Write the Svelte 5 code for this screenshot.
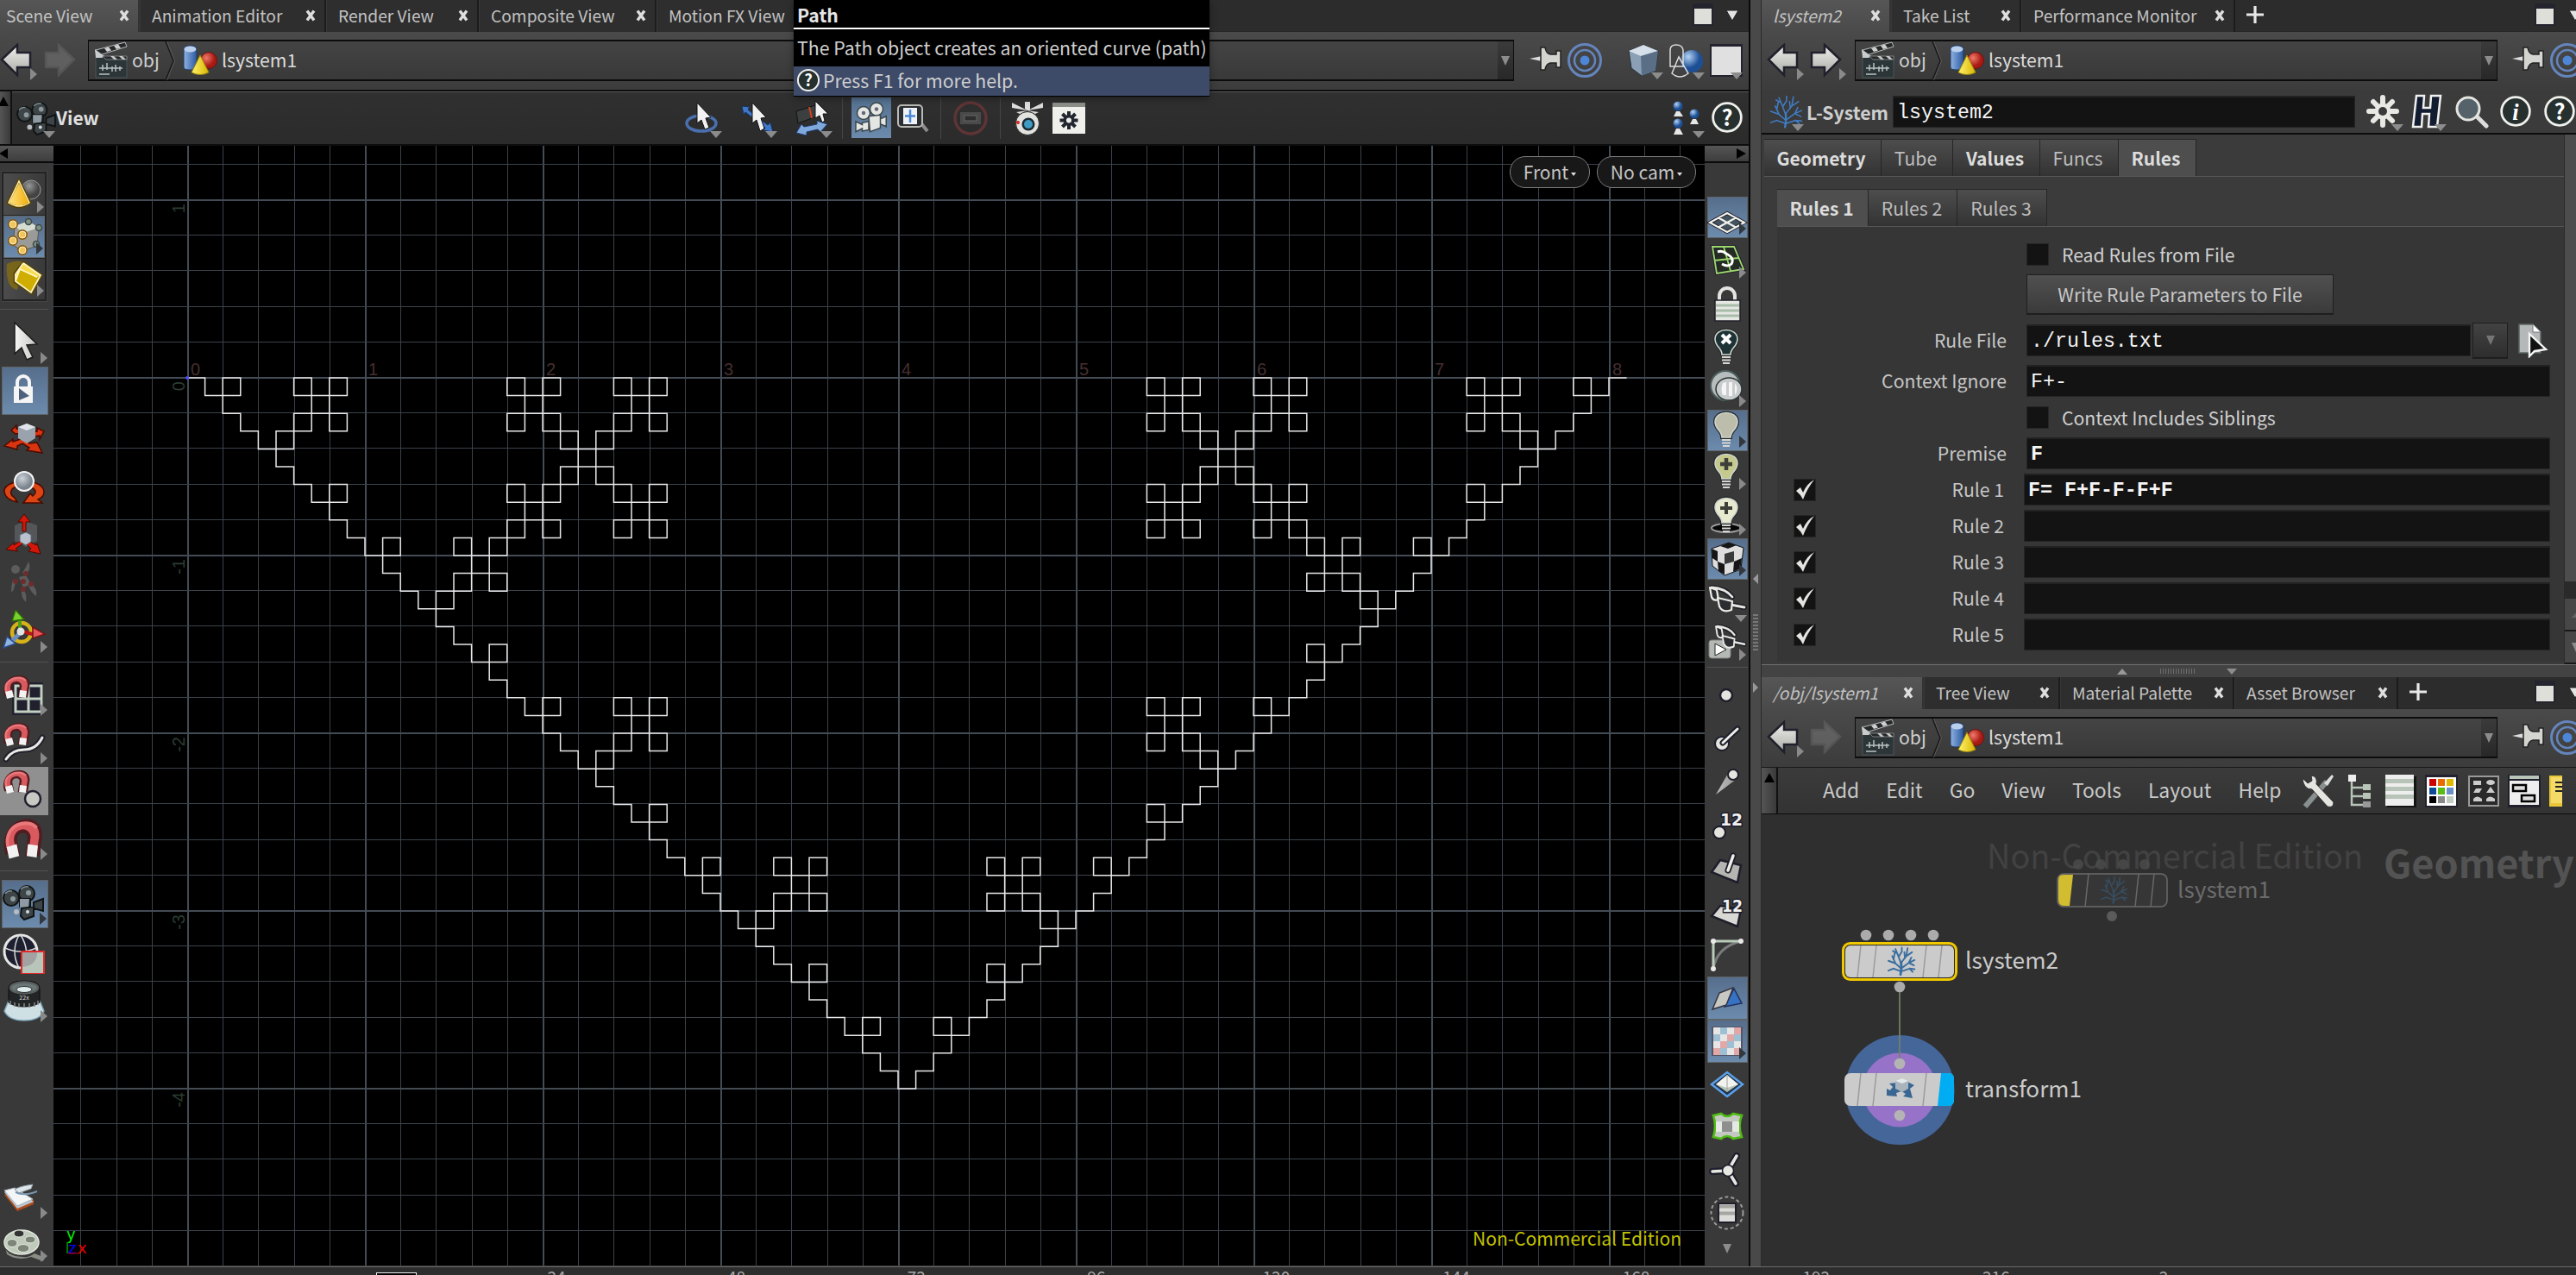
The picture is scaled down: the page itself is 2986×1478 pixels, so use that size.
<script>
  const sceneTabs = [
    { label: 'Scene View', w: 162, active: true },
    { label: 'Animation Editor', w: 216 },
    { label: 'Render View', w: 177 },
    { label: 'Composite View', w: 206 },
    { label: 'Motion FX View', w: 200 }
  ];
  const paramTabs = [
    { label: 'lsystem2', w: 150, active: true, italic: true },
    { label: 'Take List', w: 151 },
    { label: 'Performance Monitor', w: 248 }
  ];
  const networkTabs = [
    { label: '/obj/lsystem1', w: 188, active: true, italic: true },
    { label: 'Tree View', w: 158 },
    { label: 'Material Palette', w: 202 },
    { label: 'Asset Browser', w: 190 }
  ];
  const folders = [
    { label: 'Geometry', w: 136, bold: true },
    { label: 'Tube', w: 83 },
    { label: 'Values', w: 101, bold: true },
    { label: 'Funcs', w: 91 },
    { label: 'Rules', w: 90, bold: true, active: true }
  ];
  const subFolders = [
    { label: 'Rules 1', w: 106, bold: true, active: true },
    { label: 'Rules 2', w: 103 },
    { label: 'Rules 3', w: 104 }
  ];
  const rules = ['F= F+F-F-F+F', '', '', '', ''];
  const menus = ['Add', 'Edit', 'Go', 'View', 'Tools', 'Layout', 'Help'];

  const selectTools = [
    { icon: 'cone', h: 49, fly: true },
    { icon: 'points', h: 49, fly: true, on: true },
    { icon: 'cube', h: 48, fly: true }
  ];
  const transformTools = [
    { icon: 'arrow', h: 59, fly: true },
    { icon: 'lock', h: 56, on: true },
    { icon: 'move', h: 54 },
    { icon: 'rotate', h: 58 },
    { icon: 'scale', h: 55 },
    { icon: 'pose', h: 56 },
    { icon: 'handle', h: 56, fly: true }
  ];
  const snapTools = [
    { icon: 'snapgrid', h: 55, fly: true },
    { icon: 'snapcurve', h: 56, fly: true },
    { icon: 'snappoint', h: 56, lit: true },
    { icon: 'snap', h: 55, fly: true }
  ];
  const viewTools = [
    { icon: 'camera', h: 56, fly: true, on: true },
    { icon: 'globe', h: 56 },
    { icon: 'lens', h: 56, fly: true }
  ];
  const fileTools = [
    { icon: 'book', h: 52, fly: true },
    { icon: 'reel', h: 50, fly: true }
  ];
  const displayTools = [
    { icon: 'plane', h: 48, fly: true, on: true },
    { icon: 'cplane', h: 50, fly: true },
    { icon: 'padlock', h: 52 },
    { icon: 'bulbx', h: 49 },
    { icon: 'dial', h: 48, fly: true },
    { icon: 'bulb', h: 48, fly: true, on: true },
    { icon: 'bulbplus', h: 48, fly: true },
    { icon: 'bulbdisc', h: 53, fly: true },
    { icon: 'checker', h: 48, fly: true, on: true },
    { icon: 'glasses', h: 49, down: true },
    { icon: 'glassesplay', h: 48, fly: true }
  ];
  const markerTools = [
    { icon: 'dot' }, { icon: 'normal' }, { icon: 'trail' }, { icon: 'num' },
    { icon: 'prim' }, { icon: 'primnum' }, { icon: 'hull' },
    { icon: 'backface', on: true }, { icon: 'uv', on: true, fly: true },
    { icon: 'diamond' }, { icon: 'patch' }, { icon: 'spokes' }, { icon: 'list' }
  ].map((t) => ({ ...t, h: 50.1 }));

  // Viewport: world unit is 206px, origin at (217, 438)
  const unit = 206, ox = 217, oy = 438;
  const cols = Array.from({ length: 47 }, (_, i) => i - 3);
  const rows = Array.from({ length: 32 }, (_, i) => i - 6);

  function expand(rule, depth) {
    let s = 'F';
    for (let i = 0; i < depth; i++) s = s.replaceAll('F', rule);
    return s;
  }
  function trace(program, step) {
    let x = ox, y = oy, dx = step, dy = 0, d = `M${x} ${y}`;
    for (const c of program) {
      if (c === 'F') {
        x += dx; y += dy;
        d += `L${x.toFixed(1)} ${y.toFixed(1)}`;
      } else if (c === '+') [dx, dy] = [-dy, dx];
      else [dx, dy] = [dy, -dx];
    }
    return d;
  }
  const curve = trace(expand('F+F-F-F+F', 4), unit / 10);
  const frames = [24, 48, 72, 96, 120, 144, 168, 192, 216];
</script>

{#snippet tree(color, w)}
  <g fill="none" stroke={color} stroke-linecap="round">
    <path stroke-width={w * 1.5} d="M23 43C25 36 24 31 24 25" />
    <path stroke-width={w} d="M24 34L15 26L10 15M15 26L4 22M12 20L14 10M24 27L20 16L15 4M20 16L25 8V2M17 10L11 7M24 25L32 15L34 3M32 15L41 9M30 18L29 9M25 33L36 25L45 21M36 25L44 29M25 38L37 34L42 39M37 34L45 35M23 38L12 34L4 37M36 25L40 17" />
  </g>
{/snippet}

{#snippet magnet()}
  <path d="M6 24C-1 0 36 -6 33 14L31 25H22L24 13C23 7 13 8 13 15L15 24Z" fill="#d85a5f" stroke="#521c20" stroke-width="2.4" />
  <path d="M7 20C3 4 24 0 30 7" fill="none" stroke="#e9787b" stroke-width="2.5" />
  <path d="M6 20l8-2 2 8-8 2zM23 18l8 1-1 8-8-1z" fill="#f2f2f2" />
{/snippet}

{#snippet bulbBase(fill)}
  <path d="M20 33C20 25 12 24 12 15C12 1 38 1 38 15C38 24 30 25 30 33Z" {fill} stroke="#262b2b" stroke-width="4" />
  <path d="M20 33C20 25 12 24 12 15C12 1 38 1 38 15C38 24 30 25 30 33Z" {fill} stroke="#cfd3cd" stroke-width="1.6" />
  <path d="M20 36h10M20 39.500h10M21 43h8" stroke="#d5d8d4" stroke-width="2" />
{/snippet}

{#snippet glassesShape()}
  <path d="M8 9Q24 10 32 20M30 29L46 32" fill="none" stroke="#1d1d26" stroke-width="6" stroke-linecap="round" />
  <path d="M8 9Q24 10 32 20M30 29L46 32" fill="none" stroke="#e6e6e2" stroke-width="2.800" stroke-linecap="round" />
  <path d="M6 9L14 12L16 23Q10 25 8 20Z" fill="#2b2d31" stroke="#ecece8" stroke-width="2.200" stroke-linejoin="round" />
  <path d="M15 21L32 25L31 35Q21 39 17 31Z" fill="#2b2d31" stroke="#ecece8" stroke-width="2.200" stroke-linejoin="round" />
{/snippet}

{#snippet icon(name)}
  {#if name === 'cone'}
    <circle cx="36" cy="19" r="11" fill="url(#gGrey)" stroke="#999" />
    <path d="M22 8L35 34Q22 44 9 34Z" fill="url(#gYellow)" stroke="#5a4000" stroke-width="3" />
    <path d="M22 9L34 34Q22 42 10 34Z" fill="none" stroke="#fff0b0" stroke-width="1.500" />
  {:else if name === 'points'}
    <path d="M17 12L33 6L45 14L43 35L26 41L15 34Z" fill="#9a9a98" stroke="#555" />
    <path d="M17 12L33 6L45 14L27 20Z" fill="#d5ddd3" />
    {#each [[33, 7], [45, 14], [42, 33]] as p}<circle cx={p[0]} cy={p[1]} r="3.500" fill="#7f9088" stroke="#3b4a44" stroke-width="1.500" />{/each}
    {#each [[15, 10], [15, 29], [26, 22], [26, 40]] as p}<circle cx={p[0]} cy={p[1]} r="5" fill="#f2c55a" stroke="#8a5a08" stroke-width="2" /><circle cx={p[0]} cy={p[1]} r="4" fill="none" stroke="#fff2cc" />{/each}
  {:else if name === 'cube'}
    <path d="M8 8Q18 2 28 6L20 38Q6 36 8 8Z" fill="#9a7a00" opacity=".6" />
    <path d="M27 6L48 21L37 42L17 29V19Z" fill="#cfae00" stroke="#5a4600" stroke-width="3" />
    <path d="M27 7L47 21L42 24L23 14Z" fill="#f6dc4e" /><path d="M27 7L23 14L18 28V19Z" fill="#f2d23a" />
    <path d="M27 7L47 21L36 41L18 28L23 14L43 23M27 7L18 20V28" fill="none" stroke="#fff7c8" stroke-width="1.800" />
  {:else if name === 'arrow'}
    <path d="M17 3V39L25 32L31 46L38 43L31 29L43 28Z" fill="url(#gWhite)" stroke="#1c1c1c" stroke-width="1.500" />
  {:else if name === 'lock'}
    <rect x="17" y="20" width="22" height="19" fill="#f5f5f5" />
    <path d="M21 21V15a7 7 0 0 1 14 0v6" fill="none" stroke="#f5f5f5" stroke-width="4" />
    <path d="M23 22V36L35 31Z" fill="#4c617c" />
  {:else if name === 'move'}
    <path d="M5 34L15 26V29L30 24L34 31L43 30L49 42L31 39L34 36L26 31L20 34V38ZM13 16L19 10V14L28 14V19L18 20ZM34 18L43 17V13L51 17L46 26V22L34 24Z" fill="#d93410" stroke="#4a0a00" stroke-width="1.500" />
    <path d="M21 12L31 8L41 12V25L31 31L21 25Z" fill="#9aa2ad" /><path d="M21 12L31 8L41 12L31 16Z" fill="#dfe4ea" />
  {:else if name === 'rotate'}
    <path d="M17 20Q4 24 5 31Q6 40 20 43L17 38Q10 34 14 28Q17 25 22 25ZM39 20Q51 24 51 31Q51 37 44 40L49 44H27L35 33L38 36Q45 30 36 26Z" fill="#dc4513" stroke="#4a0a00" stroke-width="1.500" />
    <circle cx="28" cy="19" r="11" fill="url(#gSphere)" stroke="#f4f4f4" stroke-width="2" />
  {:else if name === 'scale'}
    <path d="M17 13L30 8L43 13V31L30 38L17 31Z" fill="#5b5f62" opacity=".8" />
    <path d="M28 0L35 9H30V20H26V9H21ZM7 41L16 33V36L25 30L27 34L18 40L21 43ZM47 46L33 43L36 40L30 34L33 31L42 36L43 34Z" fill="#d3160a" stroke="#4a0a00" />
    <path d="M23 24l7-3 6 3v8l-6 4-7-4z" fill="#b8c1cc" stroke="#5f6873" />
  {:else if name === 'pose'}
    <g fill="#5c5c5c"><circle cx="18" cy="9" r="5" /><path d="M33 0q4 8-3 15l-4-2q4-6 7-13zM22 18l8-2 6 10-9 4zM18 23q-2 13-5 12 0-8 2-14zM36 25q8 8 6 15-6-4-9-12zM26 31q6 6 4 16-6-5-5-14z" /></g>
    <g fill="#6d2c2e"><circle cx="30" cy="14" r="3" /><circle cx="18" cy="23" r="3" /><circle cx="27" cy="23" r="3" /><circle cx="36" cy="26" r="3" /><circle cx="27" cy="32" r="3" /></g>
  {:else if name === 'handle'}
    <circle cx="25" cy="26" r="11" fill="none" stroke="#d6b21a" stroke-width="4.500" />
    <path d="M26 25L41 29" stroke="#b61818" stroke-width="4" /><path d="M24 26L14 36" stroke="#6b8fc4" stroke-width="5" /><path d="M23 12V24" stroke="#4f9d17" stroke-width="4" />
    <path d="M18 0L28 11L14 13Z" fill="#79cf2b" stroke="#2c6a08" stroke-width="1.500" />
    <path d="M38 20L52 28L38 33Z" fill="#e6575b" stroke="#7a1214" stroke-width="1.500" />
    <path d="M4 44L8 31L18 39Z" fill="#8fb4e4" stroke="#2a4d85" stroke-width="1.500" />
    <circle cx="24" cy="25" r="4.500" fill="#dfe3e3" />
  {:else if name === 'snapgrid'}
    <rect x="14" y="10" width="36" height="38" fill="#20202e" /><path d="M18 14H48V44H18ZM33 14V44M18 29H48" fill="none" stroke="#c2d0c2" stroke-width="3" />
    <g transform="translate(0 1)">{@render magnet()}</g>
  {:else if name === 'snapcurve'}
    <path d="M7 44Q14 33 28 33T49 19" fill="none" stroke="#20202e" stroke-width="7" stroke-linecap="round" /><path d="M7 44Q14 33 28 33T49 19" fill="none" stroke="#e9e9e4" stroke-width="3" stroke-linecap="round" />
    <g transform="translate(0 1)">{@render magnet()}</g>
  {:else if name === 'snappoint'}
    <circle cx="38" cy="34" r="9" fill="#c9c9c4" stroke="#20202e" stroke-width="2.500" />{@render magnet()}
  {:else if name === 'snap'}
    <g transform="translate(-1 0) scale(1.45 1.7)">{@render magnet()}</g>
  {:else if name === 'camera'}
    <g fill="#3d4548" stroke="#101415" stroke-width="2"><circle cx="14" cy="18" r="9" /><circle cx="32" cy="13" r="9" /><path d="M24 19h12v9h-12zM26 30l14-2v11l-11 4-4-4zM40 23l11-4v14l-11-3z" /></g>
    <circle cx="16" cy="19" r="3" fill="#8d999d" /><circle cx="34" cy="12" r="3" fill="#8d999d" /><path d="M24 19h11l-1 9-10 1z" fill="#8f9aa5" /><circle cx="20" cy="34" r="3" fill="#b6bcc0" /><circle cx="33" cy="34" r="2" fill="#d5dadd" />
    <path d="M7 13Q10 9 15 10M25 8Q29 4 34 5" fill="none" stroke="#7f8b90" stroke-width="1.500" />
  {:else if name === 'globe'}
    <circle cx="24" cy="24" r="19" fill="#1e1f30" stroke="#e6e6e6" stroke-width="3" /><path d="M24 5Q36 24 26 43M22 5Q12 24 22 43M6 20Q24 28 42 20" fill="none" stroke="#d6dbd6" stroke-width="1.500" />
    <rect x="25" y="24" width="26" height="26" fill="#b8c5ba" stroke="#e02a2a" stroke-width="2" /><path d="M26 25h17q0 15-17 17z" fill="#a2a2a2" />
  {:else if name === 'lens'}
    <path d="M10 25L5 37Q10 48 28 48T51 37L46 25Z" fill="#cfe0e4" stroke="#79a5bb" stroke-width="1.500" />
    <path d="M10 11Q10 2 28 2T46 11V27Q40 32 28 32T10 27Z" fill="#222526" stroke="#0d0d0d" /><ellipse cx="28" cy="10" rx="16" ry="6.500" fill="#6b7677" stroke="#595f60" stroke-width="2.500" /><ellipse cx="28" cy="12" rx="9" ry="3.500" fill="#dfeded" stroke="#333" />
    <path d="M12 25v5M17 27v5M22 28v5M28 28v5M34 28v5M40 27v5M44 25v5" stroke="#888" stroke-width="1.500" />
    <text x="28" y="24" font-size="7" text-anchor="middle" fill="#ddd">22x</text>
  {:else if name === 'book'}
    <path d="M5 20L20 39L39 31V26L18 13Z" fill="#b04a1a" /><path d="M5 17L20 36L39 28L20 14Z" fill="#b9c8d4" /><path d="M5 15L17 12L38 25L20 33Z" fill="#f3f5f7" stroke="#a6b2bc" /><path d="M17 14Q22 10 38 8L36 13L22 18Z" fill="#dce5ea" stroke="#8a979f" /><path d="M18 17Q28 22 43 16" fill="none" stroke="#7895ad" stroke-width="2" />
  {:else if name === 'reel'}
    <path d="M5 25Q5 40 26 41Q34 42 40 37L52 42L50 46L36 41Q20 46 8 38Z" fill="#8a8f86" />
    <ellipse cx="25" cy="24" rx="20" ry="14" fill="#c0cabb" stroke="#e2e8dd" stroke-width="1.500" /><g fill="#7d8579" stroke="#e7ebe4"><ellipse cx="22" cy="14" rx="6" ry="4" fill="#333" /><ellipse cx="35" cy="21" rx="6" ry="4" /><ellipse cx="14" cy="25" rx="6" ry="4.500" /><ellipse cx="27" cy="31" rx="7" ry="4.500" /></g>
  {:else if name === 'plane'}
    <path d="M6 31L26 20L46 31L26 42Z" fill="#43535f" stroke="#1b1b28" stroke-width="4" /><path d="M6 31L26 20L46 31L26 42ZM16 25.500L36 36.500M36 25.500L16 36.500" fill="none" stroke="#f1f1ec" stroke-width="2.200" />
  {:else if name === 'cplane'}
    <path d="M9 10L34 10L45 36L14 41Z" fill="#242b22" stroke="#24232e" stroke-width="4" /><path d="M9 10L34 10L45 36L14 41ZM11 26L39 23M22 10L30 38" fill="none" stroke="#9cd96c" stroke-width="1.800" /><path d="M15 16Q20 14 25 18Q35 23 31 30Q27 34 20 30" fill="none" stroke="#fff" stroke-width="3" />
  {:else if name === 'padlock'}
    <path d="M17 22V16a9 9 0 0 1 18 0v6" fill="none" stroke="#e4e4e1" stroke-width="4" /><rect x="12" y="21" width="29" height="24" fill="#e6e8e3" stroke="#20202a" stroke-width="1.500" /><path d="M13 27h27M13 33h27M13 39h27" stroke="#a9bba9" stroke-width="3" />
  {:else if name === 'bulbx'}
    {@render bulbBase('#1d3336')}<path d="M20 10l10 10M30 10l-10 10" stroke="#fff" stroke-width="4" />
  {:else if name === 'dial'}
    <ellipse cx="24" cy="21" rx="17" ry="17" fill="#b7bdbd" stroke="#4e6060" stroke-width="2" /><ellipse cx="28" cy="25" rx="15" ry="13" fill="#c9cccc" stroke="#2d3535" stroke-width="1.500" /><path d="M21 18q-3 7 0 14h4V17zM28 17v16h4V17zM35 18v14q5-7 0-14z" fill="#f5f5f5" />
  {:else if name === 'bulb'}
    {@render bulbBase('#bdbdac')}
  {:else if name === 'bulbplus'}
    {@render bulbBase('#c5c98d')}<path d="M25 9v14M18 16h14" stroke="#3f3f3a" stroke-width="4.500" />
  {:else if name === 'bulbdisc'}
    <ellipse cx="25" cy="39" rx="17" ry="5" fill="#050505" stroke="#9b9b9b" stroke-width="2" />{@render bulbBase('#e8ead0')}<path d="M25 9v14M18 16h14" stroke="#3f3f3a" stroke-width="4" />
  {:else if name === 'checker'}
    <path d="M8 13L28 6L45 12L42 37L23 44L9 33Z" fill="#dedede" stroke="#111" /><path d="M18 10L28 6L37 9L27 13ZM8 13L15 16V28L9 24ZM15 28L23 31V43L16 39Z" fill="#161616" /><path d="M23 19L34 16V28L23 31Z" fill="#3a3a3a" /><path d="M34 28L43 24L42 36L33 40Z" fill="#161616" />
  {:else if name === 'glasses'}
    {@render glassesShape()}
  {:else if name === 'glassesplay'}
    <rect x="5" y="22" width="25" height="21" rx="3" fill="#b5b9b5" stroke="#7c7f7c" /><path d="M12 26V40L25 33Z" fill="#fff" stroke="#222" /><g transform="translate(8 -2) scale(.83 .9)">{@render glassesShape()}</g>
  {:else if name === 'dot'}
    <circle cx="25" cy="25" r="7" fill="#e5e5df" stroke="#1e1e2c" stroke-width="2.500" />
  {:else if name === 'normal'}
    <circle cx="20" cy="31" r="8" fill="#e5e5df" stroke="#1e1e2c" stroke-width="2" /><path d="M21 30L38 14" stroke="#1e1e2c" stroke-width="7" stroke-linecap="round" /><path d="M21 30L38 14" stroke="#f0f0ea" stroke-width="3" stroke-linecap="round" />
  {:else if name === 'trail'}
    <path d="M13 40L28 14L37 22Z" fill="url(#gWhite)" opacity=".7" /><circle cx="33" cy="17" r="6" fill="#e5e5df" stroke="#1e1e2c" stroke-width="2" />
  {:else if name === 'num'}
    <circle cx="17" cy="34" r="7" fill="#e5e5df" stroke="#1e1e2c" stroke-width="2" /><text class="mark" x="18" y="26" textLength="26" lengthAdjust="spacingAndGlyphs">12</text>
  {:else if name === 'prim'}
    <path d="M8 30L18 16L42 22L38 42Z" fill="#b5b5b2" stroke="#1e1e2c" stroke-width="2.500" /><path d="M27 28L33 11" stroke="#1e1e2c" stroke-width="7" stroke-linecap="round" /><path d="M27 28L33 11" stroke="#f0f0ea" stroke-width="3.500" stroke-linecap="round" />
  {:else if name === 'primnum'}
    <path d="M8 30L18 18L42 22L38 42Z" fill="#d8d8d4" stroke="#1e1e2c" stroke-width="2.500" /><text class="mark" x="20" y="25" textLength="24" lengthAdjust="spacingAndGlyphs">12</text>
  {:else if name === 'hull'}
    <path d="M10 41Q14 16 42 9" fill="none" stroke="#7b7b7b" stroke-width="3" /><path d="M10 41V9H42" fill="none" stroke="#b9cbb9" stroke-width="3" />{#each [[10, 9], [42, 9], [10, 41]] as p}<circle cx={p[0]} cy={p[1]} r="3" fill="#e8e8e8" />{/each}
  {:else if name === 'backface'}
    <path d="M23 35L34 14L43 31Z" fill="#3872c4" stroke="#20305c" stroke-width="1.500" /><path d="M9 38L17 19L33 13L25 33Z" fill="#c8c8c2" stroke="#333340" stroke-width="1.500" />
  {:else if name === 'uv'}
    <rect x="8" y="8" width="36" height="34" fill="#556" /><g transform="translate(10 9)"><rect width="32" height="32" fill="#e6e6e6" /><path d="M8 0h8v8H8zM0 8h8v8H0zM24 8h8v8h-8zM16 16h8v8h-8zM8 24h8v8H8z" fill="#9ec0d4" /><path d="M24 0h8v8h-8zM16 8h8v8h-8zM8 16h8v8H8zM24 24h8v8h-8zM0 24h8v8H0z" fill="#e2a7a7" /></g>
  {:else if name === 'diamond'}
    <path d="M8 25L26 11L44 25L26 39Z" fill="#23344a" stroke="#5aa0ea" stroke-width="2.500" /><path d="M13 25L26 34L39 25L26 15Z" fill="#b9c6b9" /><path d="M13 25L26 14V29ZM39 25L26 14V29Z" fill="#f2f2ee" /><path d="M26 14V34" stroke="#9aa39a" />
  {:else if name === 'patch'}
    <path d="M10 11L19 9Q26 15 33 9L43 11Q38 23 43 36L33 38Q26 32 19 38L10 36Q14 23 10 11Z" fill="#c4c8c2" stroke="#4fbb14" stroke-width="2.600" /><path d="M20 18h12v12H20z" fill="#8f8f8f" /><path d="M13 18h7v12h-7zM32 18h8v12h-8z" fill="#e6e8e4" />
  {:else if name === 'spokes'}
    <path d="M27 25L37 8M27 25L9 26M27 25L36 40" stroke="#1e1e2c" stroke-width="8" stroke-linecap="round" /><path d="M27 25L37 8M27 25L9 26M27 25L36 40" stroke="#e8e8e3" stroke-width="3.500" stroke-linecap="round" /><circle cx="27" cy="25" r="6.500" fill="#e8e8e3" stroke="#1e1e2c" stroke-width="1.500" />
  {:else if name === 'list'}
    <circle cx="26" cy="24" r="18.500" fill="none" stroke="#9a9a9a" stroke-width="2" stroke-dasharray="4 3" /><rect x="16" y="13" width="20" height="22" fill="#dcdcd9" stroke="#1e1e2c" stroke-width="2" /><path d="M17 16.500h18M17 24.500h18" stroke="#a5a5a2" stroke-width="4" />
  {/if}
{/snippet}

{#snippet toolbar(tools, right)}
  {#each tools as t}
    <div class="tool" class:on={t.on} class:lit={t.lit} style:height="{t.h}px">
      <svg width={right ? 50 : 56} height="50" viewBox="0 0 {right ? 50 : 56} 50">{@render icon(t.icon)}</svg>
      {#if t.fly}<i class="fly"></i>{/if}
      {#if t.down}<i class="tri corner"></i>{/if}
    </div>
  {/each}
{/snippet}

{#snippet tabbar(tabs, plus)}
  <div class="tabs">
    {#each tabs as t}
      <div class="tab" class:active={t.active} class:italic={t.italic} style:width="{t.w}px">
        <span>{t.label}</span>
        <svg width="12" height="14" viewBox="0 0 12 14"><path d="M2 1.500L10 12.500M10 1.500L2 12.500" stroke="#dedede" stroke-width="3.400" /></svg>
      </div>
    {/each}
    {#if plus}<svg class="plus" width="22" height="22" viewBox="0 0 22 22"><path d="M11 1V21M1 11H21" stroke="#e8e8e8" stroke-width="3.200" /></svg>{/if}
    <span class="grow"></span>
    <svg class="win" width="24" height="26" viewBox="0 0 24 26"><path d="M0 0H24V26H0Z" fill="#24242f" /><path d="M2 6H22V24H2Z" fill="#dfdfda" /></svg>
    <svg class="wintri" width="16" height="14" viewBox="0 0 16 14"><path d="M1 1H15L8 13Z" fill="#e4e4e0" stroke="#22222c" /></svg>
  </div>
{/snippet}

{#snippet nav(dir, dim)}
  <div class="nav" class:dim>
    <svg width="40" height="42" viewBox="0 0 40 42"><path d={dir < 0 ? 'M2 19L20 2V11H35V28H20V37Z' : 'M36 19L18 2V11H3V28H18V37Z'} fill={dim ? '#777' : 'url(#gNav)'} stroke={dim ? '#666' : '#20202c'} stroke-width="2.500" /></svg>
    {#if !dim}<i class="fly"></i>{/if}
  </div>
{/snippet}

{#snippet path()}
  <div class="path">
    <svg class="clap" width="40" height="44" viewBox="0 0 40 44">
      <path d="M2 18H38V42H2Z" fill="#2c3638" stroke="#4a5658" />
      <path d="M2 10L36 1L38 6L3 17Z" fill="#26292a" stroke="#b9bcbc" /><path d="M12 8l5-1.500 3 4-5 1.500zM23 5l5-1.500 3 4-5 1.500z" fill="#d0d0d0" /><path d="M1 9L12 17L9 19H2Z" fill="#c9cccc" />
      <path d="M10 17H38V21H14Z" fill="#26292a" stroke="#8d9292" stroke-width=".8" /><path d="M19 17l4 4h4l-4-4zM29 17l4 4h4l-4-4z" fill="#c5c5c5" />
      <path d="M6 31h27M10 27v7M15 25v8M21 29v6M25 27v8M30 29v5M6 38h12" stroke="#b9c1c1" stroke-width="1.500" />
    </svg>
    <span class="obj">obj</span>
    <svg class="chev" width="12" height="45" viewBox="0 0 12 45"><path d="M1 0L10 22.500L1 45" fill="none" stroke="#181818" stroke-width="1.500" /><path d="M2.500 0L11.500 22.500L2.500 45" fill="none" stroke="#5a5a5a" /></svg>
    <svg width="42" height="36" viewBox="0 0 42 36"><path d="M2 5Q2 1 9.500 1T17 5V26Q17 29 9.500 29T2 26Z" fill="url(#gBlue)" stroke="#223c63" /><ellipse cx="9.500" cy="5" rx="7" ry="3.500" fill="#b9cfec" /><circle cx="31" cy="18" r="9.500" fill="url(#gRed)" stroke="#6b1210" /><path d="M21 12L31 32Q21 37 11 32Z" fill="url(#gYel2)" stroke="#9a8410" /></svg>
    <span class="cur">lsystem1</span>
    <span class="grow"></span>
    <div class="drop"><i class="tri"></i></div>
  </div>
{/snippet}

{#snippet pinTarget()}
  <svg class="pin" width="38" height="34" viewBox="0 0 38 34"><path d="M0 15L14 12V18Z" fill="#ddd" /><path d="M13 2L18 2Q19 9 24 10H31V6H36V25H31V20H24Q19 21 18 28H13Z" fill="#d4d4d0" stroke="#222" stroke-width="1.500" /></svg>
  <svg width="42" height="42" viewBox="0 0 42 42"><g fill="none" stroke="#6485bd" stroke-width="3"><circle cx="21" cy="21" r="18.500" /><circle cx="21" cy="21" r="12" stroke-width="2.500" /></g><circle cx="21" cy="21" r="5.500" fill="#4d86d6" /></svg>
{/snippet}

{#snippet help(ch, size)}
  <svg width={size} height={size} viewBox="0 0 36 36"><circle cx="18" cy="18" r="15.500" fill="#26302f" stroke="#f0f0ec" stroke-width="2.600" /><text class={ch === 'i' ? 'inf' : 'ask'} x="18" y="27" text-anchor="middle">{ch}</text></svg>
{/snippet}

{#snippet check(on)}
  <div class="check">{#if on}<svg width="24" height="26" viewBox="0 0 24 26"><path d="M2 14L7 10L10 16Q14 6 23 1Q15 11 10 24Q7 18 2 14Z" fill="#e4e4e2" /></svg>{/if}</div>
{/snippet}

<svg class="defs" width="0" height="0">
  <defs>
    <radialGradient id="gGrey" cx=".4" cy=".3"><stop offset="0" stop-color="#999" /><stop offset="1" stop-color="#444" /></radialGradient>
    <radialGradient id="gSphere" cx=".4" cy=".35"><stop offset="0" stop-color="#cdd3da" /><stop offset="1" stop-color="#7b838d" /></radialGradient>
    <linearGradient id="gYellow"><stop offset="0" stop-color="#ffe48a" /><stop offset="1" stop-color="#f0ab00" /></linearGradient>
    <linearGradient id="gYel2"><stop offset="0" stop-color="#fff36b" /><stop offset="1" stop-color="#d9b400" /></linearGradient>
    <linearGradient id="gWhite"><stop offset="0" stop-color="#f6f6f6" /><stop offset="1" stop-color="#c4c4c0" /></linearGradient>
    <linearGradient id="gNav" x2="0" y2="1"><stop offset="0" stop-color="#f0f0ee" /><stop offset="1" stop-color="#aaaaa6" /></linearGradient>
    <linearGradient id="gBlue"><stop offset="0" stop-color="#8fb2e2" /><stop offset="1" stop-color="#2c59a0" /></linearGradient>
    <radialGradient id="gRed" cx=".35" cy=".35"><stop offset="0" stop-color="#f07a6a" /><stop offset="1" stop-color="#a81a14" /></radialGradient>
    <radialGradient id="gBall" cx=".35" cy=".3"><stop offset="0" stop-color="#b5d3f5" /><stop offset="1" stop-color="#1d4f96" /></radialGradient>
  </defs>
</svg>

<div class="app">
  <section class="scene">
    {@render tabbar(sceneTabs, false)}
    <div class="pathrow">
      {@render nav(-1, false)}
      {@render nav(1, true)}
      {@render path()}
      {@render pinTarget()}
      <div class="shade"><svg width="38" height="38" viewBox="0 0 38 38"><path d="M2 8L19 1L36 8L33 31L17 37L5 28Z" fill="#8ba0b5" stroke="#222c36" /><path d="M2 8L19 1L36 8L16 14Z" fill="#d5e0ea" /><path d="M16 14L36 8L33 31L17 37Z" fill="#5a6f85" /></svg><i class="tri corner"></i></div>
      <div class="shade"><svg width="40" height="40" viewBox="0 0 40 40"><circle cx="27" cy="20" r="13" fill="url(#gBall)" /><path d="M2 7Q2 1 9 1T17 7V26H2ZM12 15L23 34Q13 42 4 34Z" fill="#4446" stroke="#ddd" stroke-width="1.500" /></svg><i class="tri corner"></i></div>
      <div class="shade"><svg width="38" height="38" viewBox="0 0 38 38"><path d="M0 0H38V38H0Z" fill="#24242f" /><path d="M2 3H36V36H2Z" fill="#e0e0e0" /></svg><i class="tri corner"></i></div>
    </div>

    <div class="viewbar">
      <div class="collapse"><i class="up"></i></div>
      <div class="item viewicon"><svg width="48" height="40" viewBox="3 2 50 42">{@render icon('camera')}</svg><i class="tri corner"></i></div>
      <b>View</b>
      <span class="grow"></span>
      <div class="viewtools">
        <div class="item w64"><svg width="42" height="40" viewBox="0 0 42 40"><ellipse cx="20" cy="26" rx="17" ry="9" fill="none" stroke="#4a6fae" stroke-width="3.500" /><path d="M15 2V26L20 22L24 33L29 31L25 20L31 19Z" fill="#f2f2f2" stroke="#111" /></svg><i class="tri corner"></i></div>
        <div class="item w64"><svg width="42" height="40" viewBox="0 0 42 40"><path d="M3 6L12 7L10 10L33 28L36 25L39 36L28 34L30 31L7 13L5 16Z" fill="#3f78c8" stroke="#16315e" /><path d="M15 2V26L20 22L24 35L29 32L25 20L31 19Z" fill="#f2f2f2" stroke="#111" /></svg><i class="tri corner"></i></div>
        <div class="item w64"><svg width="42" height="40" viewBox="0 0 42 40"><path d="M2 12L24 5L28 17L4 26Z" fill="#3c3f40" stroke="#111" /><path d="M17 7L20 20" stroke="#d0401c" stroke-width="2" /><path d="M2 37L8 27L11 30L26 27V23L38 27L30 36L27 33L14 36V40Z" fill="#7fa8dd" stroke="#1f3c6b" /><path d="M24 0V20L29 17L32 25L35 23L33 15L39 15Z" fill="#f2f2f2" stroke="#111" /></svg><i class="tri corner"></i></div>
        <i class="sep"></i>
        <div class="item hot"><svg width="42" height="44" viewBox="0 0 56 50"><g fill="#e4e6e4" stroke="#3c464c" stroke-width="2"><circle cx="16" cy="17" r="10" /><circle cx="36" cy="11" r="10" /><path d="M24 22l18-2v20l-16 6zM4 30l10 5v-3l10-2v13l-10 2v-4L4 46zM42 26l9-4v16l-9-4z" /></g><circle cx="16" cy="17" r="3" fill="#667" /><circle cx="36" cy="11" r="3" fill="#667" /></svg></div>
        <div class="item inspect"><svg width="38" height="34" viewBox="0 0 38 34"><path d="M28 22l8 10" stroke="#8d8d8d" stroke-width="4" /><rect x="2" y="2" width="28" height="25" rx="4" fill="#2b2f33" stroke="#b9b9b5" stroke-width="2" /><path d="M8 5h16v19H8z" fill="#eef2f6" /><path d="M16 7v15M10 14.500h12" stroke="#4a86d6" stroke-width="2.500" /></svg></div>
        <i class="sep"></i>
        <div class="item w64"><svg width="42" height="42" viewBox="0 0 42 42"><circle cx="21" cy="21" r="18" fill="none" stroke="#5e3435" stroke-width="3.500" /><rect x="9" y="14" width="24" height="14" fill="#4a4a4a" /><rect x="14" y="18" width="14" height="6" fill="#2d2d2d" stroke="#666" /></svg></div>
        <i class="sep"></i>
        <div class="item shot"><svg width="42" height="42" viewBox="0 0 42 42"><path d="M21 12L3 3V9ZM21 12L39 3V9ZM21 12L8 14L12 16ZM21 12L34 14L30 16ZM18 2h6v10h-6z" fill="#ddd" /><circle cx="21" cy="27" r="13.500" fill="#e2e2de" stroke="#333" /><circle cx="22" cy="28" r="7.500" fill="#1b2a33" /><circle cx="22" cy="28" r="5" fill="#3f9cc4" /><circle cx="10" cy="26" r="2" fill="#d22" /></svg></div>
        <div class="item w46"><svg width="38" height="36" viewBox="0 0 38 36"><path d="M0 0H38V36H0Z" fill="#efefec" /><path d="M0 0H38V5H0Z" fill="#8a8f88" /><g stroke="#22262e" stroke-width="4"><path d="M19 10V31M8.500 20.500H29.500M11.500 13L26.500 28M26.500 13L11.500 28" /></g><circle cx="19" cy="20.500" r="6.500" fill="#22262e" /><circle cx="19" cy="20.500" r="3" fill="#efefec" /></svg></div>
      </div>
      <span class="grow"></span>
      <div class="item userlist"><svg width="38" height="40" viewBox="0 0 38 40"><g fill="url(#gBall)"><circle cx="9" cy="6" r="5.500" /><circle cx="28" cy="15" r="5.500" /><circle cx="9" cy="26" r="5.500" /></g><path d="M4 18L7 12H11L15 18ZM23 27L26 21H30L33 27ZM4 39L7 32H11L15 39Z" fill="#e6e6e6" /></svg><i class="tri corner"></i></div>
      <div class="item viewhelp">{@render help('?', 38)}</div>
    </div>

    <div class="stage">
      <div class="left">
        <div class="edge"><i class="goleft"></i></div>
        <div class="group">{@render toolbar(selectTools, false)}</div>
        <hr class="l1" />
        {@render toolbar(transformTools, false)}
        <hr class="l2" />
        {@render toolbar(snapTools, false)}
        <hr class="l3" />
        {@render toolbar(viewTools, false)}
        <span class="grow"></span>
        {@render toolbar(fileTools, false)}
      </div>

      <div class="viewport">
        <svg width="1914" height="1298" viewBox="62 169 1914 1298">
          <rect x="62" y="169" width="1914" height="1298" fill="#000" />
          <g class="grid">
            {#each cols as c}
              {@const x = Math.round(ox + c * unit / 5)}
              <rect class:major={c % 5 === 0} {x} y="169" width={c % 5 === 0 ? 2 : 1} height="1298" />
            {/each}
            {#each rows as r}
              {@const y = Math.round(oy + r * unit / 5 - 1)}
              <rect class:major={r % 5 === 0} x="62" {y} width="1914" height={r % 5 === 0 ? 2 : 1} />
            {/each}
          </g>
          <g class="xnum">
            {#each [0, 1, 2, 3, 4, 5, 6, 7, 8] as n}<text x={ox + 4 + n * unit} y="435">{n}</text>{/each}
          </g>
          <g class="ynum">
            {#each [1, 0, -1, -2, -3, -4] as n}<text text-anchor="end" transform="translate(214 {oy + 4 - n * unit}) rotate(-90)">{n}</text>{/each}
          </g>
          <path d={curve} fill="none" stroke="#e8e8e8" stroke-width="1.500" />
          <circle cx="217" cy="438" r="2" fill="#4a4aff" />
          <g class="axis"><text x="77" y="1437" fill="#00f000">y</text><text x="79" y="1453" fill="#0000ff">z</text><text x="90" y="1453" fill="#f00000">x</text><path d="M78 1440V1453" stroke="#00f000" /><path d="M79 1453H92" stroke="#d00000" /></g>
          <text class="nc" x="1707" y="1444" textLength="242" lengthAdjust="spacingAndGlyphs">Non-Commercial Edition</text>
        </svg>
        <div class="cams"><span>Front<i></i></span><span>No cam<i></i></span></div>
      </div>

      <div class="right">
        <div class="edge"><i class="goright"></i></div>
        {@render toolbar(displayTools, true)}
        <hr />
        {@render toolbar(markerTools, true)}
        <i class="tri more"></i>
      </div>
    </div>

    <div class="tip">
      <b>Path</b>
      <p>The Path object creates an oriented curve (path)</p>
      <footer>{@render help('?', 28)}<span>Press F1 for more help.</span></footer>
    </div>
  </section>

  <div class="splitter"><i class="sl"></i><span class="dots"></span><i class="sr"></i></div>

  <section class="side">
    {@render tabbar(paramTabs, true)}
    <div class="pathrow">
      {@render nav(-1, false)}
      {@render nav(1, false)}
      {@render path()}
      {@render pinTarget()}
    </div>
    <div class="namerow">
      <div class="item treeicon"><svg width="42" height="42" viewBox="0 0 48 44">{@render tree('#3f7cc4', 1.8)}</svg><i class="tri corner"></i></div>
      <b>L-System</b>
      <div class="field name">lsystem2</div>
      <div class="item gear"><svg width="40" height="40" viewBox="0 0 40 40"><g stroke="#e8e8e4" stroke-width="6" stroke-linecap="round"><path d="M20 4V36M4 20H36M9 9L31 31M31 9L9 31" /></g><circle cx="20" cy="20" r="9.500" fill="#e8e8e4" /><circle cx="20" cy="20" r="5" fill="#3a3a3a" /></svg><i class="tri corner"></i></div>
      <div class="item hicon"><svg width="38" height="40" viewBox="0 0 38 40"><path d="M7 2H16L15 16H23L24 2H35L31 38H21L22 23H14L13 38H3Z" fill="#121c30" stroke="#f0f0ee" stroke-width="2.500" /></svg><i class="tri corner"></i></div>
      <div class="item mag"><svg width="40" height="40" viewBox="0 0 40 40"><path d="M25 25L37 37" stroke="#ddd" stroke-width="5" stroke-linecap="round" /><circle cx="16" cy="17" r="13" fill="#566269" stroke="#e4e4e0" stroke-width="3" /></svg></div>
      <div class="item about">{@render help('i', 38)}</div>
      <div class="item">{@render help('?', 38)}</div>
    </div>

    <div class="params">
      <div class="pmain">
        <div class="folders outer">
          {#each folders as f}<div class:active={f.active} class:bold={f.bold} style:width="{f.w}px">{f.label}</div>{/each}
        </div>
        <div class="folders inner">
          {#each subFolders as f}<div class:active={f.active} class:bold={f.bold} style:width="{f.w}px">{f.label}</div>{/each}
        </div>
        <div class="form">
          <div class="row r1"><span class="lab"></span>{@render check(false)}<span class="txt">Read Rules from File</span></div>
          <div class="row r2"><span class="lab"></span><button>Write Rule Parameters to File</button></div>
          <div class="row r3"><span class="lab">Rule File</span><div class="field file">./rules.txt</div><div class="dd"><i class="tri"></i></div>
            <svg class="page" width="42" height="40" viewBox="0 0 42 40"><path d="M2 1H18L27 10V34H2Z" fill="#b5b8b8" stroke="#5c6662" stroke-width="1.500" /><path d="M18 1V10H27" fill="#fff" stroke="#777" /><path d="M14 12V38L20 32L33 30Z" fill="#111" stroke="#f4f4f4" stroke-width="2.400" /></svg></div>
          <div class="row r4"><span class="lab">Context Ignore</span><div class="field">F+-</div></div>
          <div class="row r5"><span class="lab"></span>{@render check(false)}<span class="txt">Context Includes Siblings</span></div>
          <div class="row r6"><span class="lab">Premise</span><div class="field strong">F</div></div>
          {#each rules as r, i}
            <div class="row rule">{@render check(true)}<span class="lab">Rule {i + 1}</span><div class="field strong">{r}</div></div>
          {/each}
        </div>
      </div>
      <div class="scroll"><span class="thumb"></span><span class="gap"></span><span class="btn"><i class="up2"></i></span><span class="btn"><i class="tri"></i></span></div>
    </div>

    <div class="hsplit"><i class="up2"></i><span class="hdots"></span><i class="tri"></i></div>

    {@render tabbar(networkTabs, true)}
    <div class="pathrow">
      {@render nav(-1, false)}
      {@render nav(1, true)}
      {@render path()}
      {@render pinTarget()}
    </div>
    <div class="menubar">
      <div class="collapse"><i class="up"></i></div>
      <nav>{#each menus as m}<span>{m}</span>{/each}</nav>
      <div class="neticons">
        <svg width="40" height="42" viewBox="0 0 40 42"><path d="M5 39L30 10" stroke="#888f8f" stroke-width="6" /><path d="M27 12L36 2L38 4L31 15Z" fill="#ddd" /><path d="M2 6L8 12L13 9L12 3Q20 4 18 13L38 34Q38 41 31 39L13 19Q3 19 2 6Z" fill="#e4e4e0" stroke="#333" /></svg>
        <svg width="28" height="40" viewBox="0 0 28 40"><path d="M5 8V36H20M5 16H20M5 26H20" stroke="#b7c4b7" stroke-width="2.500" fill="none" /><path d="M1 1h9v8H1z" fill="#eee" /><path d="M18 12h9v7h-9zM18 22h9v7h-9z" fill="#b7c4b7" /><path d="M18 32h9v7h-9z" fill="#999" /></svg>
        <svg width="36" height="38" viewBox="0 0 36 38"><path d="M2 2h34v36H2z" fill="#151515" /><path d="M0 0h33v36H0z" fill="#eee" /><path d="M0 5h33v5H0zM0 14h33v5H0zM0 23h33v5H0z" fill="#b7c4b7" /></svg>
        <svg width="38" height="38" viewBox="0 0 38 38"><path d="M0 0h38v38H0z" fill="#22222e" /><path d="M2 3h34v33H2z" fill="#fff" /><path d="M5 5h8v8H5z" fill="#c00" /><path d="M15 5h8v8h-8z" fill="#e86a00" /><path d="M25 5h8v8h-8z" fill="#e0b800" /><path d="M5 15h8v8H5z" fill="#0b4c94" /><path d="M15 15h8v8h-8z" fill="#58bd12" /><path d="M25 15h8v8h-8z" fill="#6a8fc8" /><path d="M5 25h8v8H5z" fill="#000" /><path d="M15 25h8v8h-8z" fill="#888" /><path d="M25 25h8v8h-8z" fill="#c2cdc2" /></svg>
        <svg width="38" height="38" viewBox="0 0 38 38"><rect x="2" y="2" width="34" height="34" fill="#2a2a2a" stroke="#9a9a9a" stroke-width="2" /><path d="M7 7h9v5H7zM7 21l3-5h7l-3 5zM22 21l5-7 5 7zM7 28q4-5 10 0v3H7zM22 28q4-5 10 0v3H22z" fill="#ccc" /><ellipse cx="27" cy="9" rx="5" ry="3" fill="#ccc" /></svg>
        <svg width="38" height="38" viewBox="0 0 38 38"><path d="M0 0h38v38H0z" fill="#20202c" /><path d="M2 1h34v4H2z" fill="#b7c4b7" /><path d="M2 7h34v28H2z" fill="#eee" /><path d="M6 12h15v7H6zM16 24h15v7H16z" fill="#ddd" stroke="#000" stroke-width="2.500" /></svg>
        <svg width="15" height="38" viewBox="0 0 15 38"><path d="M0 1h15v36H0z" fill="#e8c63a" /><path d="M2 3h13v30H2z" fill="#f4da66" /><path d="M7 9h8M7 14h8M7 19h8" stroke="#222" stroke-width="2" /></svg>
      </div>
    </div>
    <svg class="network" width="944" height="524" viewBox="2042 944 944 524">
      <text x="2303" y="1007" font-size="39" fill="#424242" textLength="436" lengthAdjust="spacingAndGlyphs">Non-Commercial Edition</text>
      <text x="2763" y="1018" font-size="45" font-weight="700" fill="#535353" textLength="221" lengthAdjust="spacingAndGlyphs">Geometry</text>
      <g opacity=".8">
        {#each [2409, 2435, 2461, 2486] as x}<circle cx={x} cy="1002" r="6" fill="#4c4c4c" />{/each}
        <rect x="2385" y="1013" width="127" height="38" rx="7" fill="#383838" stroke="#7a7a7a" stroke-width="1.500" />
        <path d="M2403 1014L2399 1050H2392Q2386 1050 2386 1043V1020Q2386 1014 2392 1014Z" fill="#fbe030" />
        <path d="M2421 1013L2417 1051M2479 1013L2475 1051M2497 1013L2493 1051" stroke="#777" stroke-width="1.500" />
        <g transform="translate(2433 1015) scale(.72 .74)">{@render tree('#3a566f', 2)}</g>
        <circle cx="2448" cy="1062" r="6" fill="#666" />
      </g>
      <text x="2524" y="1041" font-size="26" fill="#6b6b6b" textLength="108" lengthAdjust="spacingAndGlyphs">lsystem1</text>

      <circle cx="2202" cy="1263.500" r="63.500" fill="#456699" /><circle cx="2202" cy="1263.500" r="43" fill="#9673c8" />
      <path d="M2202 1148V1230" stroke="#748267" stroke-width="1.700" />
      {#each [2163, 2189, 2215, 2241] as x}<circle cx={x} cy="1084" r="6.300" fill="#ababab" />{/each}
      <rect x="2136.500" y="1093.500" width="131" height="42" rx="8" fill="#2a2a20" stroke="#f0c800" stroke-width="3" />
      <rect x="2139" y="1096" width="126" height="37" rx="6" fill="#cbcbcb" />
      <path d="M2157 1096L2153 1133M2175 1096L2171 1133M2233 1096L2229 1133M2251 1096L2247 1133" stroke="#9b9b9b" stroke-width="1.500" />
      <g transform="translate(2186 1097) scale(.74 .76)">{@render tree('#3a6e9f', 2.6)}</g>
      <circle cx="2202" cy="1144" r="6.300" fill="#ababab" />
      <text class="node" x="2278" y="1123" textLength="108" lengthAdjust="spacingAndGlyphs">lsystem2</text>

      <circle cx="2202" cy="1233" r="6.300" fill="#b4b4b4" /><circle cx="2202" cy="1293" r="6.300" fill="#b4b4b4" />
      <rect x="2138" y="1244" width="127" height="38" rx="7" fill="#cbcbcb" />
      <path d="M2250 1244H2259Q2265 1244 2265 1250V1275Q2265 1282 2259 1282H2246Z" fill="#00adf2" />
      <path d="M2157 1244L2153 1282M2175 1244L2171 1282M2233 1244L2229 1282" stroke="#9b9b9b" stroke-width="1.500" />
      <path d="M2190 1256L2199 1255L2201 1259L2210 1259L2211 1254L2219 1258L2214 1262L2217 1273L2206 1271L2209 1268L2204 1265L2198 1267L2199 1271L2187 1270V1262L2191 1264L2194 1260Z" fill="#3a6694" /><path d="M2197 1253L2205 1250L2212 1253V1262L2205 1266L2197 1262Z" fill="#a9b4bc" /><path d="M2197 1253L2205 1250L2212 1253L2205 1256Z" fill="#e4e9ec" />
      <text class="node" x="2278" y="1272" textLength="135" lengthAdjust="spacingAndGlyphs">transform1</text>
    </svg>
  </section>

  <div class="timeline">
    <svg width="2986" height="10" viewBox="0 1468 2986 10">
      {#each frames as f, i}<text x={645 + i * 208.6} y="1487" text-anchor="middle">{f}</text>{/each}
      <text x="2508" y="1487" text-anchor="middle">2</text>
      <rect x="436.500" y="1474.500" width="46" height="12" fill="#000" stroke="#f2f2f2" />
    </svg>
  </div>
</div>

<style>
  :global(body) { background: #2c2c2c; overflow: hidden; }
  * { box-sizing: border-box; }
  svg { display: block; flex: none; }
  .defs { position: absolute; }
  .app {
    width: 2986px; height: 1478px; display: grid;
    grid-template: 1468px 10px / 2029px 13px 944px;
    background: #3a3a3a; color: #cfcfcf; overflow: hidden;
    font: 21.200px/24px "Noto Sans CJK SC", "Noto Sans", sans-serif;
    white-space: nowrap;
  }
  .grow { flex: 1; }
  .scene { position: relative; display: flex; flex-direction: column; border-right: 2px solid #0a0a0a; min-width: 0; }
  .side { display: flex; flex-direction: column; overflow: hidden; min-width: 0; }

  .tabs { height: 37px; flex: none; display: flex; background: #2c2c2c; border-bottom: 1px solid #262626; font-size: 19.200px; }
  .tab { height: 37px; display: flex; align-items: center; justify-content: space-between; padding: 0 10px 1px 14px; background: #2e2e2e; border-right: 2px solid #1c1c1c; box-shadow: inset 1px 0 #383838; flex: none; color: #c2c2c2; }
  .scene .tab.active { padding-left: 7px; }
  .side .tab.active { padding-left: 13px; }
  .tab.active { background: linear-gradient(#565656, #4a4a4a); box-shadow: none; border-right-color: #333; }
  .italic span { font-style: italic; }
  .plus { margin: 6px 0 0 12px; }
  .win { margin: 4px 14px 0 0; }
  .wintri { margin: 11px 11px 0 0; }
  .side .win { margin-right: 15px; }
  .side .wintri { margin-right: -7px; }

  .pathrow { height: 67px; flex: none; display: flex; align-items: center; background: linear-gradient(#4a4a4a, #3c3c3c); padding: 0 8px 1px 0; }
  .side .pathrow { padding: 0 0 1px 6px; }
  .nav { width: 42px; height: 52px; position: relative; padding-top: 6px; flex: none; }
  .nav.dim { opacity: .55; }
  .fly { position: absolute; right: 1px; bottom: 3px; border: solid transparent; border-width: 7px 0 7px 8px; border-left-color: #8a8a8a; }
  .scene .nav { width: 44px; margin-right: 7px; }
  .scene .nav.dim { margin: 0 6px 0 -1px; }
  .scene .nav.dim + .path { margin-left: 2px; }
  .side .nav { width: 44px; margin-right: 5px; }
  .path { flex: 1; height: 48px; display: flex; align-items: center; border: 1px solid #0c0c0c; border-top-width: 2px; border-bottom-width: 2px; background: linear-gradient(#444, #393939); margin-right: 18px; }
  .side .path { flex: none; width: 745px; margin: 0 17px 0 4px; }
  .path span { padding-bottom: 2px; }
  .clap { margin-left: 6px; }
  .obj { margin-left: 4px; width: 32px; }
  .chev { margin: 0 8px 0 6px; }
  .cur { margin-left: 4px; color: #dcdcdc; }
  .drop { width: 18px; height: 44px; background: linear-gradient(#3b3b3b, #282828); display: grid; place-items: center; }
  .tri { border: solid transparent; border-width: 11px 5px 0; border-top-color: #8c8c8c; }
  .pin { margin-right: 5px; }
  .shade { position: relative; width: 42px; height: 44px; margin-right: 6px; padding-top: 3px; }
  .scene .shade:nth-last-child(3) { margin-left: 28px; }
  .scene .shade:last-child { margin-right: -1px; width: 38px; }
  .corner { position: absolute; right: 0; bottom: 0; border-width: 8px 7px 0; }

  .viewbar { height: 65px; flex: none; display: flex; align-items: center; background: linear-gradient(#303030, #2b2b2b); border-top: 2px solid #0e0e0e; border-bottom: 2px solid #0e0e0e; box-shadow: inset 0 1px #5a5a5a; position: relative; }
  .collapse { width: 14px; align-self: stretch; border-right: 2px solid #111; background: linear-gradient(90deg, #555, #3a3a3a); flex: none; padding-top: 6px; }
  .up { display: block; width: 0; border: solid transparent; border-width: 0 6px 11px; border-bottom-color: #000; margin-left: -2px; }
  .item { position: relative; height: 46px; display: flex; align-items: center; flex: none; }
  .viewicon { margin-left: 4px; width: 46px; }
  .viewbar b { font-size: 21px; margin-left: 1px; color: #e0e0e0; width: 50px; padding-bottom: 1px; }
  .viewtools { position: absolute; left: 790px; display: flex; align-items: center; }
  .w64 { width: 64px; padding-left: 3px; }
  .w64 .corner { right: 17px; }
  .sep { width: 1px; height: 48px; background: #454545; margin: 0 10px 0 -6px; }
  .hot { width: 46px; height: 47px; background: linear-gradient(#54708f, #6c8bad); padding-left: 2px; }
  .inspect { width: 50px; justify-content: center; }
  .inspect + .sep { margin: 0 10px 0 7px; }
  .w46 { width: 46px; justify-content: center; }
  .shot { width: 46px; }
  .userlist { width: 40px; margin-right: 5px; }
  .viewhelp { width: 46px; padding: 0 0 2px 2px; }

  .stage { flex: 1; display: grid; grid-template-columns: 62px 1914px 51px; min-height: 0; }
  .left, .right { display: flex; flex-direction: column; background: #393939; min-height: 0; }
  .left hr, .right hr { height: 2px; border: 0; border-top: 1px solid #525252; width: 56px; flex: none; margin: 0; }
  .left .l1 { margin: 9px 0 6px; }
  .left .l2 { margin: 7px 0 9px; }
  .left .l3 { margin: 9px 0 9px; }
  .left .tool { width: 56px; }
  .left > .tool:last-child { margin-bottom: 2px; }
  .edge { height: 20px; flex: none; background: linear-gradient(#555, #3d3d3d); border-bottom: 2px solid #0a0a0a; display: flex; align-items: center; }
  .goleft { border: solid transparent; border-width: 6px 10px 6px 0; border-right-color: #000; margin-left: -1px; }
  .goright { border: solid transparent; border-width: 6px 0 6px 11px; border-left-color: #000; margin-left: 37px; }
  .tool { position: relative; display: flex; align-items: center; justify-content: center; flex: none; }
  .on { background: linear-gradient(#566e8c, #6c8bad); border: 1px solid #5f6468; margin-left: 2px; }
  .left .tool.on { width: 54px; justify-content: flex-end; }
  .left .on .fly { right: 1px; }
  .on .fly { border-left-color: #33383e; }
  .lit { background: #909090; }
  .group { width: 52px; margin: 10px 0 0 2px; flex: none; border: 2px solid #232323; background: linear-gradient(90deg, #4c4c4c, #3a3a3a); box-shadow: 0 0 0 1px #444; }
  .left .group .tool { width: 48px; overflow: hidden; margin: 0; justify-content: center; }
  .left .group .on { outline: 1px solid #222; }
  .right .tool { width: 49px; margin: 0; padding-left: 0; }
  .right .on { width: 47px; margin-left: 3px; padding-right: 3px; }
  .right hr { margin: 4px 0 6px 2px; width: 48px; }
  .right > .tool:nth-child(2) { margin-top: 39px; }
  .more { align-self: center; margin-top: 10px; }

  .viewport { position: relative; overflow: hidden; }
  .grid rect { fill: #3b424a; }
  .grid .major { fill: #434b55; }
  .xnum, .ynum { font-family: "Liberation Sans", sans-serif; font-size: 20px; }
  .xnum { fill: #452f2e; }
  .ynum { fill: #2c3d31; }
  .axis { font-family: "DejaVu Sans", sans-serif; font-size: 18px; }
  .nc { font-size: 22px; fill: #c1c100; }
  .cams { position: absolute; top: 12px; right: 10px; display: flex; gap: 8px; }
  .cams span { height: 37px; width: 93px; border: 1.500px solid #7c7c7c; border-radius: 18px; background: #181818; display: flex; align-items: center; justify-content: center; font-size: 21px; color: #c4c4c4; padding-bottom: 2px; }
  .cams span + span { width: 115px; }
  .cams i { border: solid transparent; border-width: 4px 3px 0; border-top-color: #ddd; margin: 6px 0 0 3px; }

  .tip { position: absolute; left: 920px; top: 0; width: 482px; height: 112px; background: #000; border-bottom: 1px solid #000; color: #cfcfcf; box-shadow: 0 2px 8px #0006; font-size: 21.300px; }
  .tip b { display: block; height: 34px; line-height: 33px; padding-left: 4px; border-bottom: 2px solid #fff; color: #e6e6e6; font-size: 21.200px; }
  .tip p { margin: 0; height: 43px; line-height: 41px; padding-left: 4px; }
  .tip footer { height: 34px; background: #3d4a68; display: flex; align-items: center; gap: 3px; padding: 0 0 2px 3px; }
  .ask { font: 700 24px "Noto Sans CJK SC", sans-serif; fill: #fff; }
  .inf { font: italic 700 25px "Liberation Serif", serif; fill: #fff; }
  .mark { font: 700 20px "DejaVu Sans", sans-serif; fill: #f0f0f0; stroke: #1e1e2c; stroke-width: 3px; paint-order: stroke; }

  .splitter { background: #494949; border-right: 1px solid #2a2a2a; display: flex; flex-direction: column; align-items: center; }
  .sl { border: solid transparent; border-width: 6px 6px 6px 0; border-right-color: #999; margin-top: 665px; }
  .dots { width: 6px; height: 42px; margin: 35px 0; background: repeating-linear-gradient(#777 0 2px, transparent 2px 4px); }
  .sr { border: solid transparent; border-width: 6px 0 6px 6px; border-left-color: #999; margin-top: 2px; }

  .namerow { height: 52px; flex: none; display: flex; align-items: center; background: #3b3b3b; padding-left: 7px; border-bottom: 2px solid #0c0c0c; }
  .namerow b { margin-left: 3px; width: 108px; padding-top: 2px; }
  .namerow .name { margin-left: 4px; }
  .treeicon { width: 42px; }
  .field { height: 37px; background: #131313; border: 1px solid #242424; border-top: 2px solid #222; color: #f4f4f4; font: 23.300px/36px "Liberation Mono", monospace; padding-left: 4px; flex: 1; white-space: pre; }
  .strong { font-weight: 700; }
  .namerow .name { flex: none; width: 536px; }
  .gear { margin-left: 12px; width: 44px; }
  .hicon { margin-left: 8px; width: 42px; }
  .mag { margin-left: 9px; width: 52px; }
  .about { margin-right: 12px; width: 39px; }

  .params { height: 614px; flex: none; display: flex; background: #3b3b3b; }
  .pmain { width: 930px; padding: 5px 0 0 3px; }
  .folders { display: flex; border-bottom: 1px solid #575757; height: 44px; }
  .folders div { border: 1px solid #262626; border-left-width: 0; border-bottom: 0; background: linear-gradient(#4d4d4d, #333); display: grid; place-items: center; line-height: 40px; color: #bdbdbd; padding-right: 3px; }
  .folders .active { background: #4e4e4e; }
  .folders .bold { font-weight: 700; color: #dcdcdc; font-size: 21px; }
  .inner { margin: 14px 0 0 15px; }
  .inner div { padding-right: 2px; }
  .form { margin-left: 15px; background: #363636; height: 504px; padding-top: 9px; }
  .row { display: flex; align-items: center; }
  .lab { width: 266px; text-align: right; margin-right: 23px; color: #c6c6c6; flex: none; }
  .check { width: 26px; height: 26px; background: #131313; border: 1px solid #262626; flex: none; }
  .txt { margin-left: 15px; }
  .r1, .r2 { height: 46px; }
  button { width: 356px; height: 47px; border: 1px solid #1e1e1e; border-bottom-width: 2px; background: linear-gradient(#505050, #3a3a3a); color: #c8c8c8; font: inherit; padding: 0; }
  .r3 { margin-top: 12px; height: 37px; }
  .file { flex: none; width: 515px; }
  .dd { width: 41px; height: 42px; border: 1px solid #1e1e1e; border-bottom-width: 2px; background: linear-gradient(#424242, #2e2e2e); display: grid; place-items: center; margin: 0 11px 0 2px; }
  .dd .tri { border-top-color: #757575; }
  .row .lab { padding-bottom: 1px; }
  .r4 { margin-top: 10px; height: 37px; padding-right: 16px; }
  .r5 { margin-top: 10px; height: 27px; }
  .r6 { margin-top: 10px; height: 37px; padding-right: 16px; }
  .rule { margin-top: 5px; height: 37px; padding: 0 16px 0 19px; }
  .rule .lab { width: 218px; margin-right: 23px; }
  .rule .check svg { margin: -1px 0 0 0; }
  .scroll { flex: 1; background: #2a2a2a; display: flex; flex-direction: column; border-left: 1px solid #2a2a2a; overflow: hidden; }
  .thumb { height: 518px; background: #4d4d4d; }
  .gap { height: 20px; }
  .btn { height: 38px; background: #474747; border-bottom: 2px solid #181818; display: flex; align-items: center; padding-left: 8px; }
  .btn .up2 { border-bottom-color: #666; }

  .hsplit { height: 15px; flex: none; background: #434343; border-top: 1px solid #707070; display: flex; align-items: center; padding-left: 412px; }
  .up2 { border: solid transparent; border-width: 0 6px 7px; border-bottom-color: #999; }
  .hsplit .tri { border-width: 7px 6px 0; }
  .hdots { width: 42px; height: 6px; margin: 0 35px 0 38px; background: repeating-linear-gradient(90deg, #6e6e6e 0 1px, transparent 1px 3px); }

  .menubar { height: 55px; flex: none; display: flex; align-items: center; background: linear-gradient(#3b3b3b, #333); border-top: 1px solid #181818; border-bottom: 1px solid #0c0c0c; }
  .menubar .collapse { width: 19px; }
  .menubar .up { margin-left: 3px; }
  nav { display: flex; gap: 31px; padding: 0 0 3px 52px; font-size: 22.900px; color: #c9c9c9; width: 606px; }
  .neticons { display: flex; align-items: center; gap: 10px; }
  .neticons svg:nth-child(1) { margin-right: 4px; }
  .neticons svg:nth-child(2) { margin-right: 6px; }
  .neticons svg:nth-child(4) { margin-right: 1px; }
  .neticons svg:nth-child(5) { margin-right: -1px; }
  .network { background: #2f2f2f; }
  .network text { font-family: "Noto Sans CJK SC", sans-serif; }
  .node { font-size: 26px; fill: #cacaca; }
  .timeline { grid-column: 1 / -1; background: #2d2d2d; border-top: 1px solid #6a6a6a; }
  .timeline text { font-size: 19px; fill: #a8a8a8; }
</style>
